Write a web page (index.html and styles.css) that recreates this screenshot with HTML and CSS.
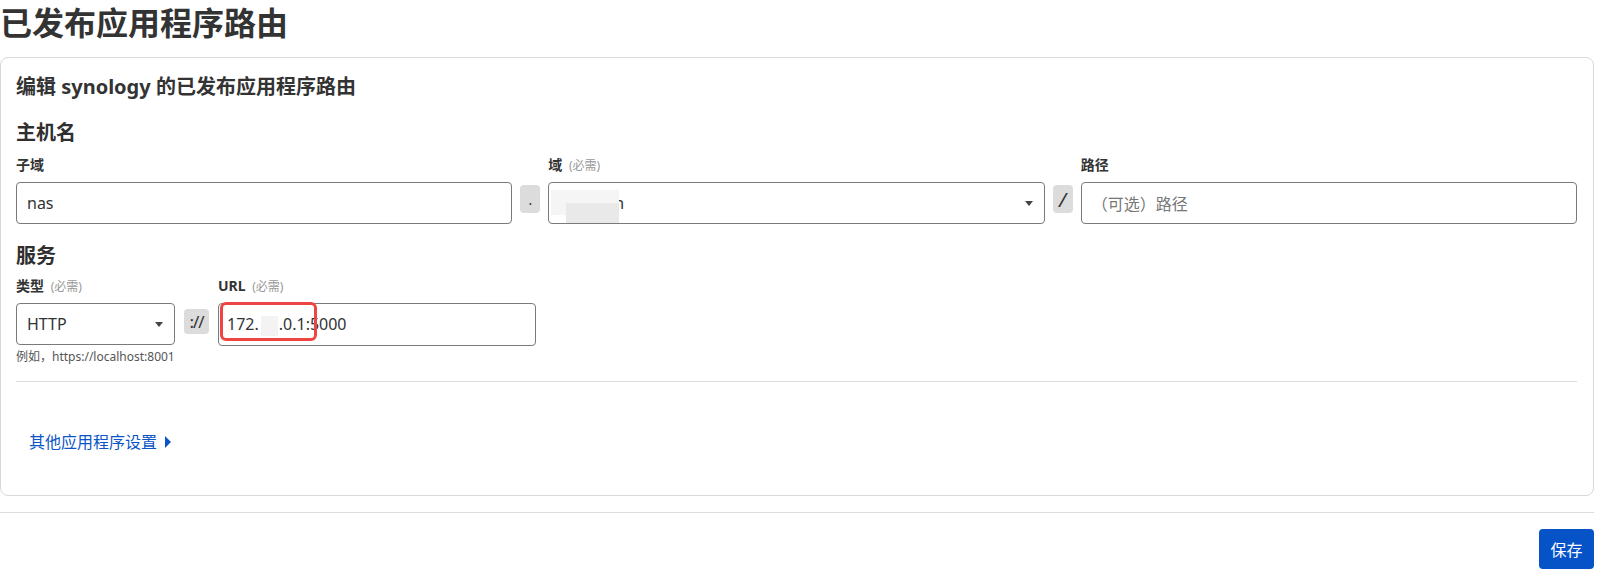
FILE: index.html
```html
<!DOCTYPE html>
<html lang="zh-CN">
<head>
<meta charset="utf-8">
<title>已发布应用程序路由</title>
<link rel="stylesheet" href="styles.css">
</head>
<body>
<div class="page">
  <h1 class="title">已发布应用程序路由</h1>
  <div class="card">
    <h2 class="card-title">编辑 synology 的已发布应用程序路由</h2>

    <h3 class="section">主机名</h3>
    <div class="host-grid">
      <label class="label">子域</label>
      <span></span>
      <label class="label">域 <span class="req">(必需)</span></label>
      <span></span>
      <label class="label">路径</label>

      <div class="input"><span class="value">nas</span></div>
      <div class="sep sep-host">.</div>
      <div class="input select">
        <span class="masked"><span class="blur-a"></span><span class="blur-b"></span><span class="value">n</span></span>
        <span class="arrow"></span>
      </div>
      <div class="sep sep-host sep-slash">/</div>
      <div class="input"><span class="placeholder">（可选）路径</span></div>
    </div>

    <h3 class="section section-service">服务</h3>
    <div class="service-grid">
      <label class="label label-service">类型 <span class="req">(必需)</span></label>
      <span></span>
      <label class="label label-service">URL <span class="req">(必需)</span></label>

      <div class="input select">
        <span class="value">HTTP</span>
        <span class="arrow"></span>
      </div>
      <div class="sep sep-proto">://</div>
      <div class="input url">
        <span class="value">172.<span class="blur-ip"></span>.0.1:5000</span>
        <span class="highlight"></span>
      </div>

      <div class="hint">例如，https://localhost:8001</div>
    </div>

    <hr class="divider">

    <a class="more" href="#">其他应用程序设置<span class="tri"></span></a>
  </div>
  <hr class="footer-line">
  <div class="actions">
    <button class="btn-primary" type="button">保存</button>
  </div>
</div>
</body>
</html>
```

FILE: styles.css
```css
html, body {
  margin: 0;
  padding: 0;
  background: #ffffff;
}

body {
  font-family: "Noto Sans", "Noto Sans CJK SC", sans-serif;
  color: #333333;
}

.page {
  width: 1594px;
}

.title {
  margin: 0 0 11px 0;
  font-size: 32px;
  line-height: 46px;
  font-weight: 700;
  color: #333333;
}

.card {
  border: 1px solid #d9d9d9;
  border-radius: 8px;
  padding: 15px 16px 42px 15px;
}

.card-title {
  margin: 0 0 18px 0;
  font-size: 20px;
  line-height: 28px;
  font-weight: 700;
  color: #333333;
}

.section {
  margin: 0 0 8px 0;
  font-size: 20px;
  line-height: 28px;
  font-weight: 700;
  color: #2f2f2f;
}

.section-service {
  margin-top: 18px;
  margin-bottom: 6px;
}

.label {
  display: block;
  font-size: 14px;
  line-height: 20px;
  font-weight: 700;
  color: #333333;
  margin-bottom: 6px;
}

.label-service {
  margin-bottom: 6px;
}

.req {
  font-size: 12px;
  font-weight: 400;
  color: #999999;
  margin-left: 3px;
}

.host-grid {
  display: grid;
  grid-template-columns: 1fr 20px 1fr 20px 1fr;
  column-gap: 8px;
}

.service-grid {
  display: grid;
  grid-template-columns: 159px 25px 318px;
  column-gap: 9px;
  justify-content: start;
}

.input {
  position: relative;
  box-sizing: border-box;
  height: 42px;
  border: 1px solid #7a7a7a;
  border-radius: 4px;
  display: flex;
  align-items: center;
  padding: 0 10px;
  font-size: 16px;
  color: #333333;
  background: #ffffff;
}

.input.url {
  height: 43px;
  padding-left: 8px;
}

.value {
  white-space: nowrap;
}

.placeholder {
  color: #777777;
}

.select {
  justify-content: space-between;
  padding-right: 11px;
}

.arrow {
  width: 0;
  height: 0;
  border-left: 4px solid transparent;
  border-right: 4px solid transparent;
  border-top: 5px solid #444444;
}

.masked {
  position: relative;
  display: flex;
  align-items: center;
  padding-left: 55px;
}

.masked .value {
  position: relative;
}

.blur-a {
  position: absolute;
  left: -8px;
  top: -2px;
  width: 68px;
  height: 25px;
  background: #f5f5f5;
  z-index: 1;
}

.blur-b {
  position: absolute;
  left: 7px;
  top: 11px;
  width: 53px;
  height: 20px;
  background: #e9e9e9;
  z-index: 1;
}

.sep {
  align-self: start;
  box-sizing: border-box;
  background: #dcdcdc;
  border-radius: 4px;
  display: flex;
  align-items: center;
  justify-content: center;
  color: #333333;
}

.sep-host {
  margin-top: 3px;
  height: 28px;
  font-size: 14px;
}

.sep-slash {
  font-size: 20px;
  font-style: italic;
}

.sep-proto {
  margin-top: 6px;
  height: 25px;
  font-size: 17px;
  letter-spacing: -1px;
}

.blur-ip {
  display: inline-block;
  width: 17px;
  height: 20px;
  margin: 0 1px 0 2px;
  vertical-align: middle;
  background: #f3f3f3;
}

.highlight {
  position: absolute;
  left: 1px;
  top: -2px;
  width: 97px;
  height: 39px;
  box-sizing: border-box;
  border: 3px solid #ef4444;
  border-radius: 6px;
}

.hint {
  grid-column: 1 / 4;
  margin-top: 3px;
  font-size: 12px;
  line-height: 16px;
  color: #555555;
}

.divider {
  margin: 16px 0 0 0;
  border: 0;
  border-top: 1px solid #dddddd;
  height: 0;
}

.more {
  display: inline-flex;
  align-items: center;
  margin: 49px 0 0 13px;
  font-size: 16px;
  line-height: 22px;
  color: #0b55c6;
  text-decoration: none;
}

.tri {
  display: inline-block;
  margin-left: 8px;
  width: 0;
  height: 0;
  border-top: 6px solid transparent;
  border-bottom: 6px solid transparent;
  border-left: 6px solid #0b55c6;
}

.footer-line {
  margin: 16px 0 0 0;
  border: 0;
  border-top: 1px solid #dddddd;
  height: 0;
}

.actions {
  display: flex;
  justify-content: flex-end;
  padding-top: 16px;
}

.btn-primary {
  width: 55px;
  height: 40px;
  border: 0;
  border-radius: 4px;
  background: #0653c7;
  color: #ffffff;
  font-family: "Noto Sans", "Noto Sans CJK SC", sans-serif;
  font-size: 16px;
  padding: 0;
}
```
